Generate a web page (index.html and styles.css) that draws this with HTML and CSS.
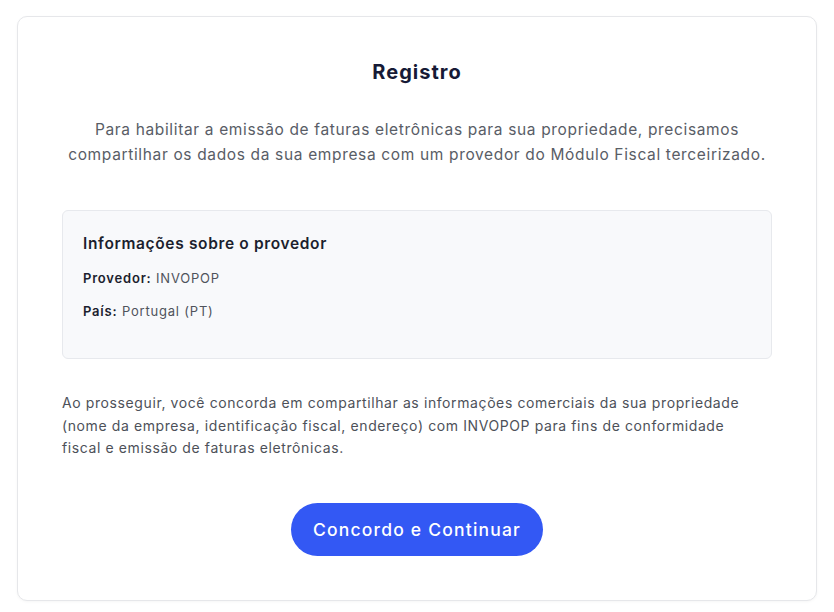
FILE: index.html
```html
<!DOCTYPE html>
<html lang="pt">
<head>
<meta charset="utf-8">
<title>Registro</title>
<link rel="stylesheet" href="styles.css">
</head>
<body>
  <div class="card">
    <h1 class="title">Registro</h1>
    <p class="intro">Para habilitar a emissão de faturas eletrônicas para sua propriedade, precisamos<br>compartilhar os dados da sua empresa com um provedor do Módulo Fiscal terceirizado.</p>
    <div class="info">
      <h2 class="info-title">Informações sobre o provedor</h2>
      <p class="info-row"><strong>Provedor:</strong> INVOPOP</p>
      <p class="info-row"><strong>País:</strong> Portugal (PT)</p>
    </div>
    <p class="consent">Ao prosseguir, você concorda em compartilhar as informações comerciais da sua propriedade<br>(nome da empresa, identificação fiscal, endereço) com INVOPOP para fins de conformidade<br>fiscal e emissão de faturas eletrônicas.</p>
    <div class="actions">
      <button class="btn-primary" type="button">Concordo e Continuar</button>
    </div>
  </div>
</body>
</html>
```

FILE: styles.css
```css
* { box-sizing: border-box; }
html, body { background: #ffffff; }
body {
  margin: 0;
  padding: 16px 17px 12px 17px;
  font-family: Inter, "Open Sans", sans-serif;
  color: #555a63;
}
.card {
  width: 800px;
  height: 585px;
  border: 1px solid #e6e7ea;
  border-radius: 10px;
  background: #fff;
  box-shadow: 0 1px 3px rgba(0,0,0,0.04);
  padding: 41px 44px 43px 44px;
  display: flex;
  flex-direction: column;
}
.title {
  margin: 0;
  text-align: center;
  font-size: 20px;
  line-height: 28px;
  font-weight: 700;
  letter-spacing: 1px;
  color: #161a36;
}
.intro {
  margin: 31px 0 0 0;
  text-align: center;
  font-size: 15.5px;
  line-height: 25px;
  letter-spacing: 0.65px;
  color: #595d66;
}
.info {
  margin-top: 43px;
  background: #f8f9fb;
  border: 1px solid #e7e9ed;
  border-radius: 6px;
  padding: 22px 20px 37px 20px;
}
.info-title {
  margin: 0;
  font-size: 15.5px;
  line-height: 22px;
  font-weight: 600;
  letter-spacing: 0.65px;
  color: #1c1f2e;
}
.info-row {
  margin: 13px 0 0 0;
  font-size: 13px;
  line-height: 20px;
  letter-spacing: 0.8px;
  color: #4f535c;
}
.info-row strong { font-weight: 600; color: #1c1f2e; }
.consent {
  margin: 33px 0 0 0;
  font-size: 14px;
  line-height: 22.5px;
  letter-spacing: 0.6px;
  color: #4d5159;
}
.actions {
  margin-top: 43px;
  display: flex;
  justify-content: center;
}
.btn-primary {
  width: 252px;
  height: 53px;
  border: 0;
  border-radius: 27px;
  background: #3358f4;
  color: #ffffff;
  font-family: inherit;
  font-size: 17.5px;
  font-weight: 500;
  letter-spacing: 1.2px;
  cursor: pointer;
}
```
